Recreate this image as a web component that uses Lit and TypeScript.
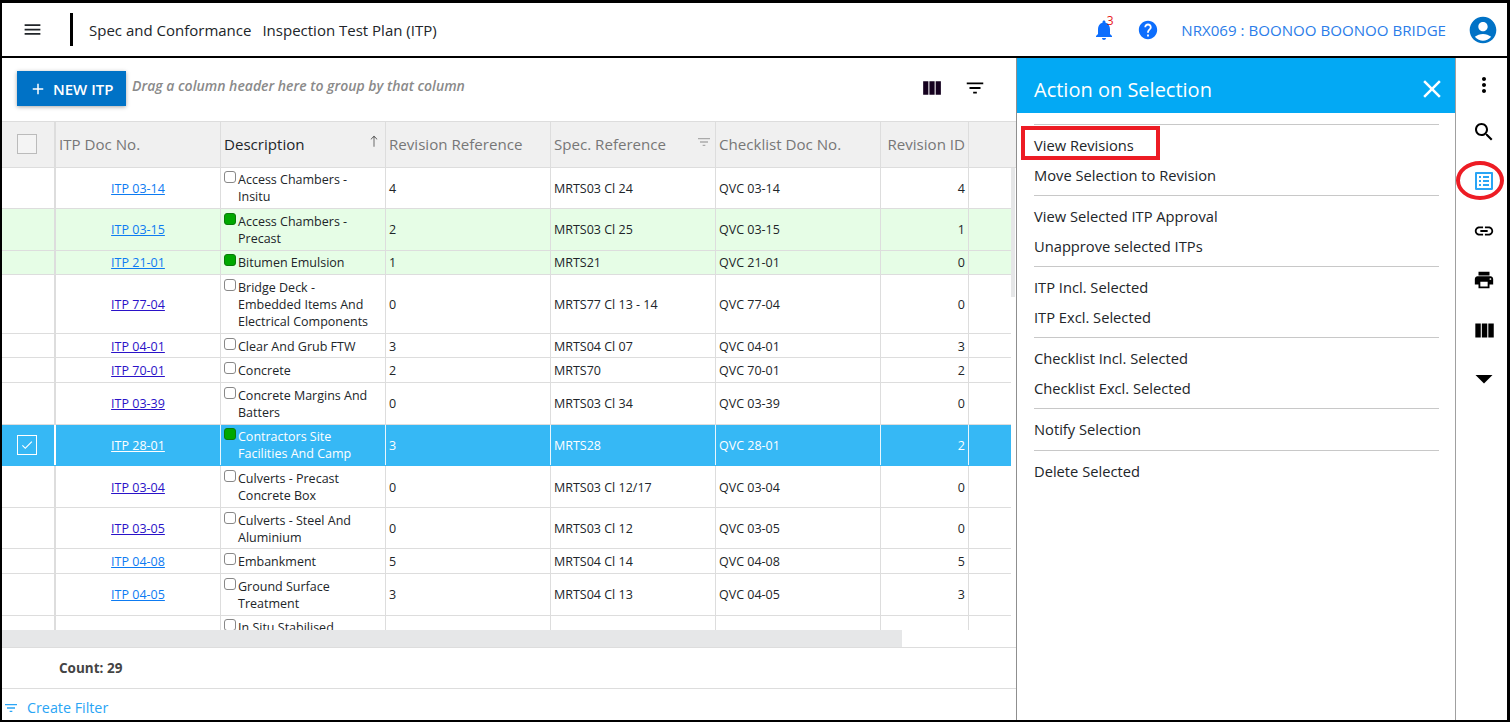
import { LitElement, html, css, svg } from "lit";
import { customElement } from "lit/decorators.js";

type Row = { no: string; desc: string[]; rev: string; spec: string; chk: string; id: string; visited?: boolean; on?: boolean; sel?: boolean };

const rows: Row[] = [
  { no: "ITP 03-14", desc: ["Access Chambers -", "Insitu"], rev: "4", spec: "MRTS03 Cl 24", chk: "QVC 03-14", id: "4" },
  { no: "ITP 03-15", desc: ["Access Chambers -", "Precast"], rev: "2", spec: "MRTS03 Cl 25", chk: "QVC 03-15", id: "1", on: true },
  { no: "ITP 21-01", desc: ["Bitumen Emulsion"], rev: "1", spec: "MRTS21", chk: "QVC 21-01", id: "0", on: true },
  { no: "ITP 77-04", desc: ["Bridge Deck -", "Embedded Items And", "Electrical Components"], rev: "0", spec: "MRTS77 Cl 13 - 14", chk: "QVC 77-04", id: "0", visited: true },
  { no: "ITP 04-01", desc: ["Clear And Grub FTW"], rev: "3", spec: "MRTS04 Cl 07", chk: "QVC 04-01", id: "3", visited: true },
  { no: "ITP 70-01", desc: ["Concrete"], rev: "2", spec: "MRTS70", chk: "QVC 70-01", id: "2", visited: true },
  { no: "ITP 03-39", desc: ["Concrete Margins And", "Batters"], rev: "0", spec: "MRTS03 Cl 34", chk: "QVC 03-39", id: "0", visited: true },
  { no: "ITP 28-01", desc: ["Contractors Site", "Facilities And Camp"], rev: "3", spec: "MRTS28", chk: "QVC 28-01", id: "2", sel: true },
  { no: "ITP 03-04", desc: ["Culverts - Precast", "Concrete Box"], rev: "0", spec: "MRTS03 Cl 12/17", chk: "QVC 03-04", id: "0", visited: true },
  { no: "ITP 03-05", desc: ["Culverts - Steel And", "Aluminium"], rev: "0", spec: "MRTS03 Cl 12", chk: "QVC 03-05", id: "0", visited: true },
  { no: "ITP 04-08", desc: ["Embankment"], rev: "5", spec: "MRTS04 Cl 14", chk: "QVC 04-08", id: "5" },
  { no: "ITP 04-05", desc: ["Ground Surface", "Treatment"], rev: "3", spec: "MRTS04 Cl 13", chk: "QVC 04-05", id: "3" },
  { no: "", desc: ["In Situ Stabilised"], rev: "", spec: "", chk: "", id: "" },
];

const groups = [
  ["View Revisions", "Move Selection to Revision"],
  ["View Selected ITP Approval", "Unapprove selected ITPs"],
  ["ITP Incl. Selected", "ITP Excl. Selected"],
  ["Checklist Incl. Selected", "Checklist Excl. Selected"],
  ["Notify Selection"],
  ["Delete Selected"],
];

const icon = (d: string, size = 24, fill = "currentColor") =>
  html`<svg width=${size} height=${size} viewBox="0 0 24 24" fill=${fill}>${svg`<path d=${d}></path>`}</svg>`;

const P = {
  menu: "M3 18h18v-2H3v2zm0-5h18v-2H3v2zm0-7v2h18V6H3z",
  plus: "M19 13h-6v6h-2v-6H5v-2h6V5h2v6h6v2z",
  cols: "M10 18h5V5h-5v13zm-6 0h5V5H4v13zM16 5v13h5V5h-5z",
  filter: "M10 18h4v-2h-4v2zM3 6v2h18V6H3zm3 7h12v-2H6v2z",
  bell: "M12 22c1.1 0 2-.9 2-2h-4c0 1.1.9 2 2 2zm6-6v-5c0-3.07-1.63-5.64-4.5-6.32V4c0-.83-.67-1.5-1.5-1.5s-1.5.67-1.5 1.5v.68C7.64 5.36 6 7.92 6 11v5l-2 2v1h16v-1l-2-2z",
  help: "M12 2C6.48 2 2 6.48 2 12s4.48 10 10 10 10-4.48 10-10S17.52 2 12 2zm1 17h-2v-2h2v2zm2.07-7.75l-.9.92C13.45 12.9 13 13.5 13 15h-2v-.5c0-1.1.45-2.1 1.17-2.83l1.24-1.26c.37-.36.59-.86.59-1.41 0-1.1-.9-2-2-2s-2 .9-2 2H8c0-2.21 1.79-4 4-4s4 1.79 4 4c0 .88-.36 1.68-.93 2.25z",
  user: "M12 2C6.48 2 2 6.48 2 12s4.48 10 10 10 10-4.48 10-10S17.52 2 12 2zm0 4c1.93 0 3.5 1.57 3.5 3.5S13.93 13 12 13s-3.5-1.57-3.5-3.5S10.07 6 12 6zm0 14c-2.03 0-4.43-.82-6.14-2.88C7.55 15.8 9.68 15 12 15s4.45.8 6.14 2.12C16.43 19.18 14.03 20 12 20z",
  close: "M19 6.41L17.59 5 12 10.59 6.41 5 5 6.41 10.59 12 5 17.59 6.41 19 12 13.41 17.59 19 19 17.59 13.41 12z",
  more: "M12 8c1.1 0 2-.9 2-2s-.9-2-2-2-2 .9-2 2 .9 2 2 2zm0 2c-1.1 0-2 .9-2 2s.9 2 2 2 2-.9 2-2-.9-2-2-2zm0 6c-1.1 0-2 .9-2 2s.9 2 2 2 2-.9 2-2-.9-2-2-2z",
  search: "M15.5 14h-.79l-.28-.27C15.41 12.59 16 11.11 16 9.5 16 5.91 13.09 3 9.5 3S3 5.91 3 9.5 5.91 16 9.5 16c1.61 0 3.09-.59 4.23-1.57l.27.28v.79l5 4.99L20.49 19l-4.99-5zm-6 0C7.01 14 5 11.99 5 9.5S7.01 5 9.5 5 14 7.01 14 9.5 11.99 14 9.5 14z",
  list: "M19 5v14H5V5h14m1.1-2H3.9c-.5 0-.9.4-.9.9v16.2c0 .4.4.9.9.9h16.2c.4 0 .9-.5.9-.9V3.9c0-.5-.5-.9-.9-.9zM11 7h6v2h-6V7zm0 4h6v2h-6v-2zm0 4h6v2h-6v-2zM7 7h2v2H7V7zm0 4h2v2H7v-2zm0 4h2v2H7v-2z",
  link: "M3.9 12c0-1.71 1.39-3.1 3.1-3.1h4V7H7c-2.76 0-5 2.24-5 5s2.24 5 5 5h4v-1.9H7c-1.71 0-3.1-1.39-3.1-3.1zM8 13h8v-2H8v2zm9-6h-4v1.9h4c1.71 0 3.1 1.39 3.1 3.1s-1.39 3.1-3.1 3.1h-4V17h4c2.76 0 5-2.24 5-5s-2.24-5-5-5z",
  print: "M19 8H5c-1.66 0-3 1.34-3 3v6h4v4h12v-4h4v-6c0-1.66-1.34-3-3-3zm-3 11H8v-5h8v5zm3-7c-.55 0-1-.45-1-1s.45-1 1-1 1 .45 1 1-.45 1-1 1zm-1-9H6v4h12V3z",
  down: "M3.5 8h17L12 16.5z",
  up: "M11.4 22V5.2L7 9.6 6.2 8.8 12 3l5.8 5.8-.8.8-4.4-4.4V22z",
  check: "M9 16.2 4.8 12l-1.4 1.4L9 19 21 7l-1.4-1.4z",
};

@customElement("app-root")
export class AppRoot extends LitElement {
  static styles = css`
    :host { display: block; width: 1510px; height: 722px; box-sizing: border-box; border: solid #000; border-width: 3px 3px 2px 2px; font-family: "Open Sans", "Noto Sans", sans-serif; color: #212529; background: #fff; overflow: hidden; font-size: 12.5px; }
    * { box-sizing: border-box; }
    svg { display: block; flex: none; }
    .frame { display: flex; flex-direction: column; height: 100%; }
    header { height: 55px; flex: none; border-bottom: 2px solid #000; display: flex; align-items: center; padding-left: 19.5px; }
    .hamb { color: #212529; }
    .bar { width: 3px; height: 33px; background: #000; margin: 0 16px 0 27.5px; }
    .title { font-size: 15px; display: flex; gap: 11px; color: #212529; flex: 1; }
    .bell { position: relative; color: #0d6efd; margin-right: 21px; }
    .bell b { position: absolute; left: 14.5px; top: -3px; font-weight: 400; color: #e81a1a; font-size: 12px; line-height: 12px; }
    .help { color: #0d6efd; margin-right: 22px; }
    .proj { color: #2b7de9; font-size: 15.1px; margin-right: 20.5px; }
    .user { color: #0072c6; margin-right: 8.5px; }
    main { flex: 1; min-height: 0; display: flex; }
    .left { width: 1014px; flex: none; display: flex; flex-direction: column; min-width: 0; }
    .tools { height: 63px; flex: none; display: flex; align-items: flex-start; padding: 13px 0 0 15px; }
    .new { width: 109px; height: 35px; background: #0072c6; color: #fff; display: flex; align-items: center; padding-left: 12px; gap: 6px; font-weight: 600; font-size: 15px; box-shadow: 0 1px 4px rgba(0,0,0,.35); }
    .hint { font-style: italic; font-weight: 600; color: #8a8a8a; font-size: 14px; margin: 5px 0 0 6px; flex: 1; }
    .tools .ic { color: #000; margin-top: 5px; }
    .tools .cols { margin-right: 20px; color: #14001e; }
    .tools .filt { margin-right: 30.5px; margin-top: 6px; }
    .thead, .tr { display: grid; grid-template-columns: 54px 165px 165px 165px 165px 165px 88px 43px; }
    .thead { height: 46.5px; flex: none; background: #f0f0f0; border-top: 1px solid #ddd; border-bottom: 1px solid #ddd; grid-template-columns: 54px 165px 165px 165px 165px 165px 88px 47px; width: 1014px; font-size: 15.1px; color: #777; }
    .th { border-right: 1px solid #ddd; display: flex; align-items: center; padding: 0 3px; position: relative; }
    .th.chk, .td.chk { border-right: 2px solid #ddd; justify-content: center; padding: 0 5px 0 3px; }
    .th.dark { color: #212529; justify-content: space-between; }
    .th.dark svg { margin: -6px 1px 0 0; color: #333; }
    .th.r { justify-content: flex-end; }
    .th.noline, .td.noline { border-right: none; }
    .th .sf { position: absolute; right: 3px; top: 12px; color: #aaa; }
    .box { width: 20px; height: 20px; border: 1px solid #bbb; background: #f4f4f4; }
    .body { height: 462.5px; flex: none; position: relative; overflow: hidden; display: flex; }
    .rows { width: 1009px; flex: none; }
    .tr { border-bottom: 1px solid #ddd; color: #212529; }
    .tr.on { background: #e6fde6; }
    .tr.sel { background: #36b8f5; color: #fff; border-bottom-color: #36b8f5; }
    .td { padding: 3.8px 3px 2.8px; border-right: 1px solid #ddd; display: flex; align-items: center; line-height: 17px; min-width: 0; }
    .sel .td { border-right-color: #e8f6fd; }
    .sel .td.chk { border-right-color: #fff; }
    .td.r { justify-content: flex-end; }
    .td.link { justify-content: center; }
    .td a { color: #0d7bf2; text-decoration: underline; }
    .td a.vis { color: #2a12c8; }
    .sel .td a { color: #fff; }
    .td.desc { align-items: flex-start; padding-left: 3px; }
    .dot { width: 12px; height: 12px; border: 1px solid #888; border-radius: 3px; margin: 0 2px 0 0; flex: none; background: #fff; }
    .dot.g { background: #00a800; border-color: #0a7a0a; }
    .lines { display: flex; flex-direction: column; white-space: nowrap; }
    .selbox { width: 20px; height: 20px; border: 1px solid #fff; color: #fff; display: flex; align-items: center; justify-content: center; }
    .vscroll { width: 4px; flex: none; }
    .vthumb { height: 129px; background: #e6e7e8; }
    .hscroll { height: 18px; flex: none; border-bottom: 1px solid #ddd; }
    .hthumb { width: 900px; height: 17px; background: #e6e7e8; }
    .count { height: 41px; flex: none; border-bottom: 1px solid #ddd; padding-left: 57px; display: flex; align-items: center; font-weight: 700; color: #444; font-size: 13.5px; }
    .filterbar { flex: 1; display: flex; align-items: center; gap: 8px; padding: 6px 0 0 1px; color: #2aa5f5; font-size: 14.3px; }
    .panel { width: 440px; flex: none; border-left: 1px solid #8f8f8f; border-right: 1px solid #a0a0a0; display: flex; flex-direction: column; }
    .phead { height: 55px; flex: none; background: #03a9f4; color: #fff; display: flex; align-items: center; justify-content: space-between; padding: 6px 8px 0 17px; font-size: 20px; }
    .phead span { margin-top: 2px; }
    .pbody { padding: 11px 16px 0 17px; }
    .group { border-top: 1px solid #c8c8c8; padding: 5px 0; }
    .item { height: 30px; display: flex; align-items: center; font-size: 14.7px; color: #212529; position: relative; }
    .item:only-child { margin-bottom: 1px; }
    .mark { position: absolute; left: -13px; top: -4px; width: 139px; height: 34px; border: 4px solid #ed1c24; }
    .rail { flex: 1; display: flex; flex-direction: column; align-items: center; padding: 15px 0 0 5px; color: #000; }
    .rail > div { height: 49.5px; width: 24px; display: flex; justify-content: center; position: relative; }
    .rail > div:first-child { height: 46.5px; }
    .rail .active { color: #2aa5f5; }
    .ring { position: absolute; left: -16px; top: -8.5px; width: 48px; height: 39px; border: 4px solid #ed1c24; border-radius: 50%; }
    .link-ic { padding-top: 1px; }
  `;

  render() {
    return html`<div class="frame">
      <header>
        <div class="hamb">${icon(P.menu, 21)}</div>
        <div class="bar"></div>
        <div class="title"><span>Spec and Conformance</span><span>Inspection Test Plan (ITP)</span></div>
        <div class="bell">${icon(P.bell)}<b>3</b></div>
        <div class="help">${icon(P.help, 22)}</div>
        <div class="proj">NRX069 : BOONOO BOONOO BRIDGE</div>
        <div class="user">${icon(P.user, 32)}</div>
      </header>
      <main>
        <div class="left">
          <div class="tools">
            <div class="new">${icon(P.plus, 18)}<span>NEW ITP</span></div>
            <div class="hint">Drag a column header here to group by that column</div>
            <div class="ic cols">${icon(P.cols, 25)}</div>
            <div class="ic filt">${icon(P.filter, 22)}</div>
          </div>
          <div class="thead">
            <div class="th chk"><div class="box"></div></div>
            <div class="th">ITP Doc No.</div>
            <div class="th dark">Description${icon(P.up, 14)}</div>
            <div class="th">Revision Reference</div>
            <div class="th">Spec. Reference<div class="sf">${icon(P.filter, 16)}</div></div>
            <div class="th">Checklist Doc No.</div>
            <div class="th r">Revision ID</div>
            <div class="th noline"></div>
          </div>
          <div class="body">
            <div class="rows">
              ${rows.map((r) => html`<div class="tr ${r.on ? "on" : ""} ${r.sel ? "sel" : ""}">
                <div class="td chk">${r.sel ? html`<div class="selbox">${icon(P.check, 14)}</div>` : ""}</div>
                <div class="td link"><a class=${r.visited ? "vis" : ""}>${r.no}</a></div>
                <div class="td desc"><div class="dot ${r.on || r.sel ? "g" : ""}"></div><div class="lines">${r.desc.map((l) => html`<span>${l}</span>`)}</div></div>
                <div class="td">${r.rev}</div>
                <div class="td">${r.spec}</div>
                <div class="td">${r.chk}</div>
                <div class="td r">${r.id}</div>
                <div class="td noline"></div>
              </div>`)}
            </div>
            <div class="vscroll"><div class="vthumb"></div></div>
          </div>
          <div class="hscroll"><div class="hthumb"></div></div>
          <div class="count">Count: 29</div>
          <div class="filterbar">${icon(P.filter, 16)}<span>Create Filter</span></div>
        </div>
        <div class="panel">
          <div class="phead"><span>Action on Selection</span>${icon(P.close, 30)}</div>
          <div class="pbody">
            ${groups.map((g, gi) => html`<div class="group">
              ${g.map((t, ti) => html`<div class="item">${t}${gi === 0 && ti === 0 ? html`<div class="mark"></div>` : ""}</div>`)}
            </div>`)}
          </div>
        </div>
        <div class="rail">
          <div>${icon(P.more)}</div>
          <div>${icon(P.search)}</div>
          <div class="active">${icon(P.list)}<div class="ring"></div></div>
          <div class="link-ic">${icon(P.link, 22)}</div>
          <div class="link-ic">${icon(P.print, 22)}</div>
          <div>${icon(P.cols, 26)}</div>
          <div>${icon(P.down)}</div>
        </div>
      </main>
    </div>`;
  }
}
